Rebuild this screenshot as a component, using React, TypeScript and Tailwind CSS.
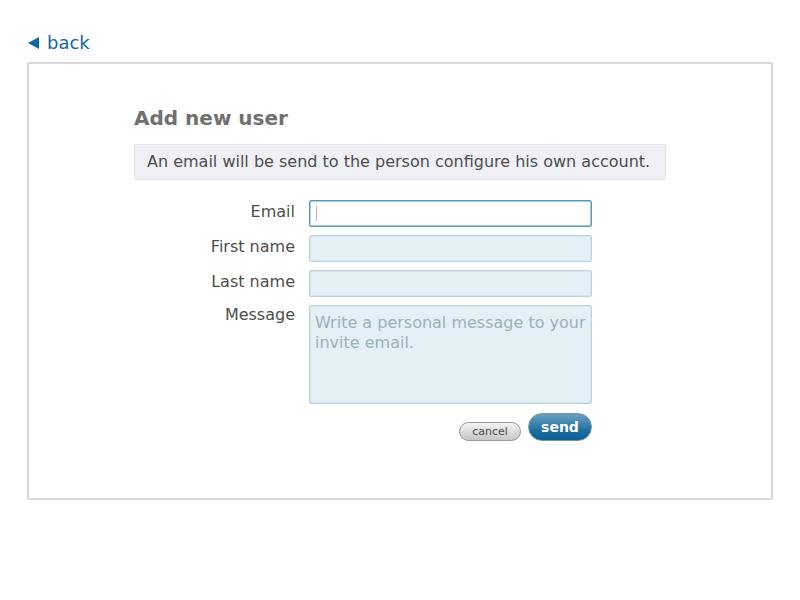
const label = "pr-[14px] text-right text-[16px]";
const field =
  "block w-full rounded-xs border px-[5px] text-[16px] outline-none";
const filled = "border-[#bfd2dd] bg-[#e4eff6] shadow-[inset_0_0_0_1px_#d6e4ec]";

export default function App() {
  return (
    <main className="min-h-screen bg-white px-[27px] pt-[31px] pb-[100px] font-['DejaVu_Sans',sans-serif] text-[#4d4d4d]">
      <a href="#" className="flex w-fit items-center gap-2 text-[18px] leading-6 text-[#12679c]">
        <svg className="h-3 w-3" viewBox="0 0 12 12" fill="currentColor" aria-hidden="true">
          <path d="M1 6 12 0v12z" />
        </svg>
        back
      </a>
      <section className="mt-[7px] rounded-xs border-2 border-[#d9d9d9] px-6 pt-10 pb-[57px]">
        <div className="mx-auto max-w-[532px]">
          <h1 className="text-[20px] leading-7 font-bold text-[#707070]">Add new user</h1>
          <p className="mt-3 rounded-xs border border-[#e2e3e8] bg-[#eff0f5] px-3 py-[5px] text-[16px] leading-6">
            An email will be send to the person configure his own account.
          </p>
          <form
            className="mt-5 grid grid-cols-[175px_minmax(0,283px)] gap-y-2"
            onSubmit={(event) => event.preventDefault()}
          >
            <label htmlFor="email" className={`${label} leading-6`}>Email</label>
            <div className="relative">
              <input
                id="email"
                type="email"
                className={`${field} h-[27px] border-[#5b99bf] bg-white caret-transparent shadow-[inset_0_0_0_1px_#a9cade]`}
              />
              <span className="pointer-events-none absolute top-[6px] left-[7px] h-[15px] w-px bg-[#b5b5b5]" />
            </div>
            <label htmlFor="first" className={`${label} leading-6`}>First name</label>
            <input id="first" type="text" className={`${field} ${filled} h-[27px]`} />
            <label htmlFor="last" className={`${label} leading-6`}>Last name</label>
            <input id="last" type="text" className={`${field} ${filled} h-[27px]`} />
            <label htmlFor="message" className={`${label} leading-5`}>Message</label>
            <textarea
              id="message"
              className={`${field} ${filled} h-[99px] resize-none pt-[7px] leading-5 placeholder:text-[#9db1ba]`}
              placeholder="Write a personal message to your invite email."
            />
            <div className="col-start-2 mt-px flex items-end justify-end gap-[7px]">
              <button
                type="button"
                className="h-[19px] w-[62px] rounded-full border border-[#999999] bg-linear-to-b from-[#f4f4f4] to-[#c6c6c6] text-[11px] leading-4 text-[#4a4a4a]"
              >
                cancel
              </button>
              <button
                type="submit"
                className="h-7 w-16 rounded-full border border-[#7795a8] bg-linear-to-b from-[#6ba2c3] via-[#1f70a1] via-60% to-[#0a6094] text-[14px] leading-5 font-bold text-white"
              >
                send
              </button>
            </div>
          </form>
        </div>
      </section>
    </main>
  );
}
